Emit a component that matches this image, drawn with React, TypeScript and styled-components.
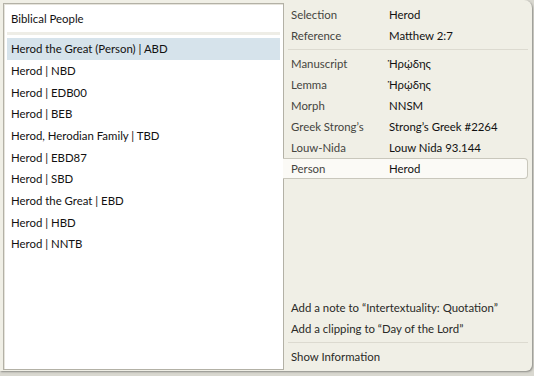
import styled, { createGlobalStyle } from "styled-components";

const Global = createGlobalStyle`
  html, body {
    margin: 0;
    padding: 0;
    background: #d9d8d0;
    overflow: hidden;
  }
  body {
    font-family: Lato, "Noto Sans", sans-serif;
    font-size: 11.4px;
  }
`;

const articles = [
  "Herod the Great (Person) | ABD",
  "Herod | NBD",
  "Herod | EDB00",
  "Herod | BEB",
  "Herod, Herodian Family | TBD",
  "Herod | EBD87",
  "Herod | SBD",
  "Herod the Great | EBD",
  "Herod | HBD",
  "Herod | NNTB",
];

const details: { label: string; value: string }[] = [
  { label: "Selection", value: "Herod" },
  { label: "Reference", value: "Matthew 2:7" },
  { label: "Manuscript", value: "Ἡρῴδης" },
  { label: "Lemma", value: "Ἡρῴδης" },
  { label: "Morph", value: "NNSM" },
  { label: "Greek Strong’s", value: "Strong’s Greek #2264" },
  { label: "Louw-Nida", value: "Louw Nida 93.144" },
];

export default function App() {
  return (
    <>
      <Global />
      <Page>
        <Popup>
          <Submenu>
            <SubmenuTitle>Biblical People</SubmenuTitle>
            <SubmenuList>
              {articles.map((a, i) => (
                <Article key={a} selected={i === 0}>
                  {a}
                </Article>
              ))}
            </SubmenuList>
          </Submenu>
          <Menu>
            <Group>
              {details.slice(0, 2).map((d) => (
                <Row key={d.label}>
                  <Label>{d.label}</Label>
                  <Value>{d.value}</Value>
                </Row>
              ))}
            </Group>
            <Separator />
            <Group>
              {details.slice(2).map((d) => (
                <Row key={d.label}>
                  <Label>{d.label}</Label>
                  <Value>{d.value}</Value>
                </Row>
              ))}
              <Row active>
                <Label>Person</Label>
                <Value>Herod</Value>
              </Row>
            </Group>
            <Spacer />
            <Group>
              <Action>Add a note to “Intertextuality: Quotation”</Action>
              <Action>Add a clipping to “Day of the Lord”</Action>
            </Group>
            <Separator />
            <Action>Show Information</Action>
          </Menu>
        </Popup>
      </Page>
    </>
  );
}

const Page = styled.div({
  width: 534,
  height: 376,
  display: "flex",
  alignItems: "flex-start",
});

const Popup = styled.div({
  width: 532,
  height: 371,
  boxSizing: "border-box",
  display: "flex",
  backgroundColor: "#f0efe6",
  borderTopRightRadius: 8,
  borderBottomRightRadius: 6,
  boxShadow: "1px 1px 2px rgba(0, 0, 0, 0.35)",
  padding: "3px 0 1px 3px",
  color: "#111",
});

const Submenu = styled.div({
  width: 281,
  boxSizing: "border-box",
  display: "flex",
  flexDirection: "column",
  backgroundColor: "#fff",
  border: "1px solid #b3b1a6",
  boxShadow: "inset 1px 1px 0 #e6e4dc",
  padding: "0 3px",
});

const SubmenuTitle = styled.div({
  height: 28,
  display: "flex",
  alignItems: "center",
  paddingLeft: 4,
  borderBottom: "3px solid #eeede6",
  marginBottom: 3,
});

const SubmenuList = styled.div({
  display: "flex",
  flexDirection: "column",
});

const Article = styled.div<{ selected?: boolean }>((p) => ({
  height: 21.67,
  display: "flex",
  alignItems: "center",
  paddingLeft: 4,
  backgroundColor: p.selected ? "#d6e3eb" : "transparent",
}));

const Menu = styled.div({
  flex: 1,
  display: "flex",
  flexDirection: "column",
  paddingTop: 1,
  paddingBottom: 3,
});

const Group = styled.div({
  display: "flex",
  flexDirection: "column",
});

const Row = styled.div<{ active?: boolean }>((p) => ({
  height: 21,
  boxSizing: "border-box",
  display: "flex",
  alignItems: "center",
  padding: p.active ? "0 0 0 8px" : "0 0 0 7px",
  marginRight: p.active ? 4 : 0,
  marginLeft: p.active ? -1 : 0,
  backgroundColor: p.active ? "#fbfaf6" : "transparent",
  border: p.active ? "1px solid #c9c7bc" : "none",
  borderLeft: "none",
  borderRadius: p.active ? "0 4px 4px 0" : 0,
  position: p.active ? "relative" : "static",
}));

const Label = styled.div({
  width: 98,
  color: "#45453f",
});

const Value = styled.div({
  color: "#111",
});

const Separator = styled.div({
  height: 1,
  backgroundColor: "#dcdad0",
  margin: "3px 4px 3px 4px",
});

const Spacer = styled.div({
  flex: 1,
});

const Action = styled.div({
  height: 21,
  display: "flex",
  alignItems: "center",
  paddingLeft: 7,
  color: "#2a2a26",
});
